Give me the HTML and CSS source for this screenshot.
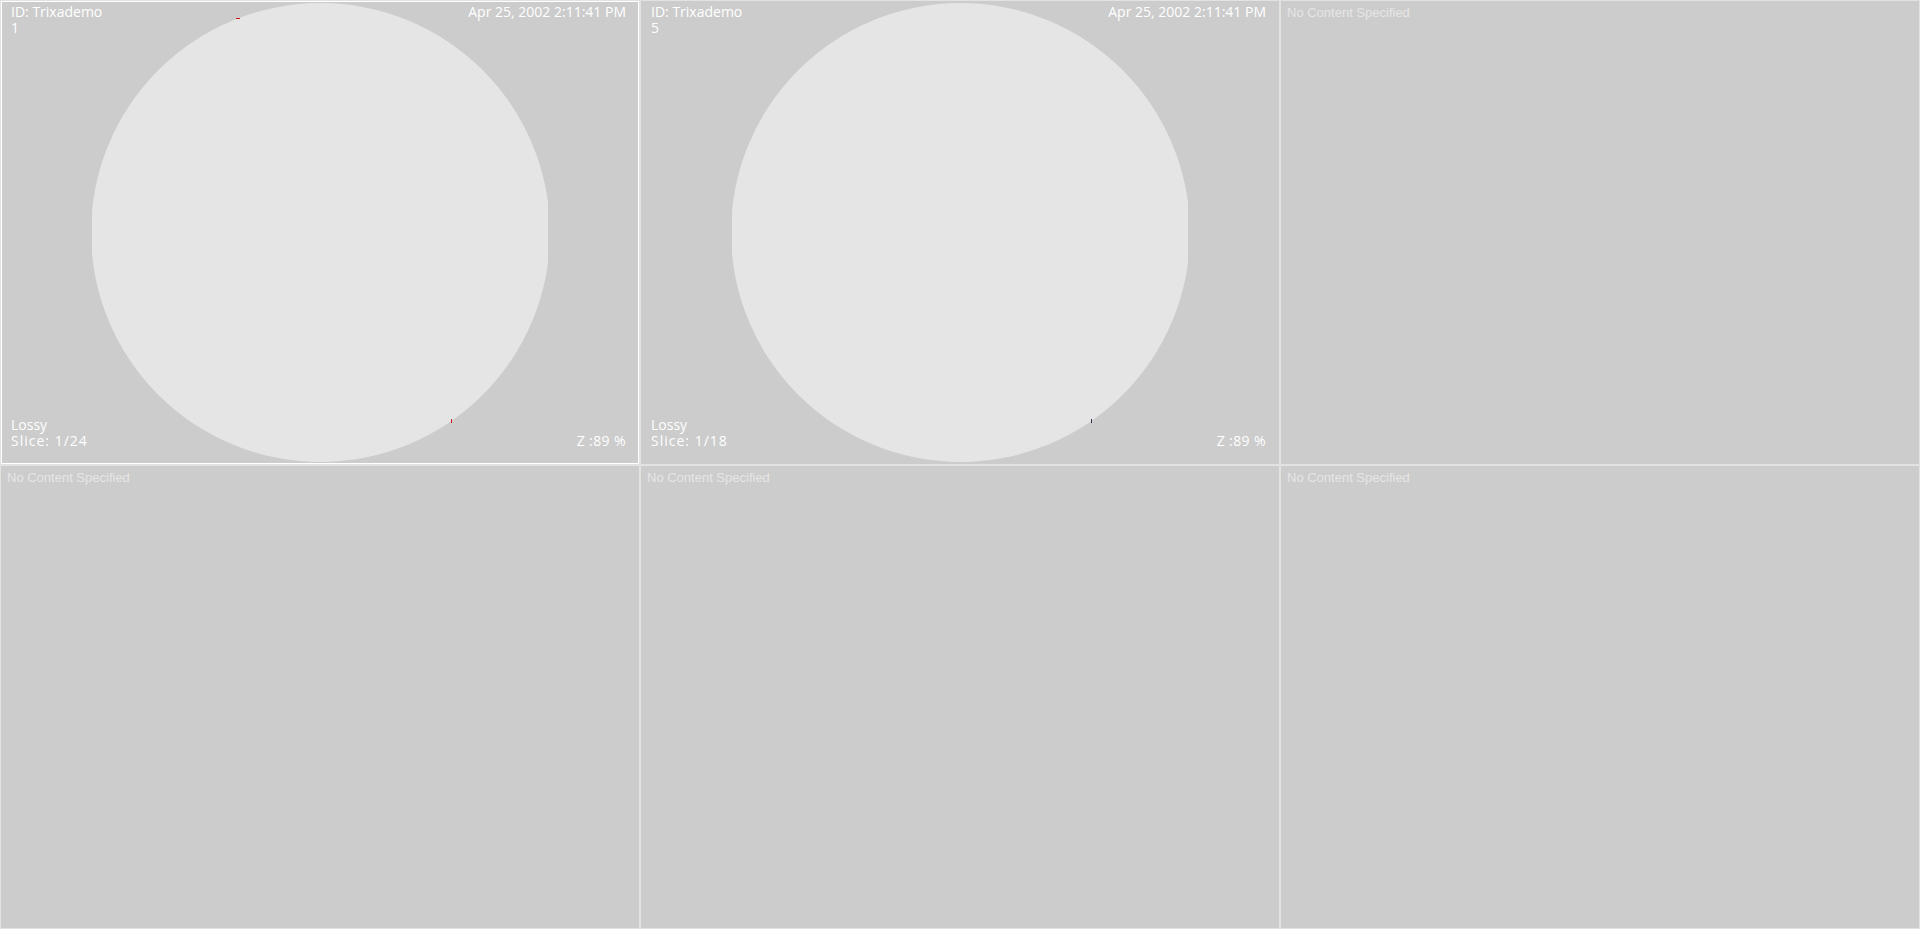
FILE: index.html
```html
<!DOCTYPE html>
<html lang="en">
<head>
  <meta charset="UTF-8">
  <title>Viewer</title>
  <link rel="stylesheet" href="styles.css">
</head>
<body>
  <div class="viewer">
    <!-- viewport 1 (active) -->
    <div class="viewport active">
      <div class="image">
        <div class="scan"></div>
      </div>
      <span class="mark mark-top"></span>
      <span class="mark mark-side"></span>
      <div class="corner top-left">
        <div>ID: Trixademo</div>
        <div>1</div>
      </div>
      <div class="corner top-right">Apr 25, 2002 2:11:41 PM</div>
      <div class="corner bottom-left">
        <div>Lossy</div>
        <div class="spaced">Slice: 1/24</div>
      </div>
      <div class="corner bottom-right spaced-sm">Z :89 %</div>
    </div>

    <!-- viewport 2 -->
    <div class="viewport">
      <div class="image">
        <div class="scan"></div>
      </div>
      <span class="mark mark-side dark"></span>
      <div class="corner top-left">
        <div>ID: Trixademo</div>
        <div>5</div>
      </div>
      <div class="corner top-right">Apr 25, 2002 2:11:41 PM</div>
      <div class="corner bottom-left">
        <div>Lossy</div>
        <div class="spaced">Slice: 1/18</div>
      </div>
      <div class="corner bottom-right spaced-sm">Z :89 %</div>
    </div>

    <div class="viewport empty"><span class="empty-text">No Content Specified</span></div>
    <div class="viewport empty"><span class="empty-text">No Content Specified</span></div>
    <div class="viewport empty"><span class="empty-text">No Content Specified</span></div>
    <div class="viewport empty"><span class="empty-text">No Content Specified</span></div>
  </div>
</body>
</html>
```

FILE: styles.css
```css
html, body {
  margin: 0;
  height: 100%;
}

body {
  background: #cccccc;
  font-family: 'Open Sans', 'Noto Sans', sans-serif;
  overflow: hidden;
}

.viewer {
  display: grid;
  grid-template-columns: repeat(3, 1fr);
  grid-template-rows: repeat(2, 1fr);
  width: 100vw;
  height: 100vh;
}

.viewport {
  position: relative;
  background-color: #cccccc;
  border: 1px solid #e2e2e2;
  overflow: hidden;
  display: flex;
  align-items: center;
  justify-content: center;
}

.viewport.active {
  box-shadow: inset 0 0 0 1px #ffffff;
}

.image {
  width: 456px;
  height: 462px;
  overflow: hidden;
  display: flex;
  align-items: center;
  justify-content: center;
}

.scan {
  flex: none;
  width: 459px;
  height: 459px;
  border-radius: 50%;
  background-color: #e5e5e5;
}

.mark {
  position: absolute;
  background-color: #d0101a;
}

.mark-top {
  left: 235px;
  top: 17px;
  width: 4px;
  height: 1px;
}

.mark-side {
  left: 450px;
  top: 418px;
  width: 1px;
  height: 4px;
}

.mark.dark {
  background-color: #3a2a4a;
}

.corner {
  position: absolute;
  color: #ffffff;
  font-size: 14px;
  line-height: 16px;
}

.top-left {
  top: 3px;
  left: 10px;
}

.top-right {
  top: 3px;
  right: 13px;
}

.bottom-left {
  bottom: 15px;
  left: 10px;
}

.bottom-right {
  bottom: 15px;
  right: 13px;
}

.spaced {
  letter-spacing: 1px;
}

.spaced-sm {
  letter-spacing: 0.4px;
}

.viewport.empty {
  align-items: flex-start;
  justify-content: flex-start;
}

.empty-text {
  padding: 4px 0 0 6px;
  font-family: 'Liberation Sans', Arial, sans-serif;
  font-size: 13px;
  color: #e6e6e6;
}
```
